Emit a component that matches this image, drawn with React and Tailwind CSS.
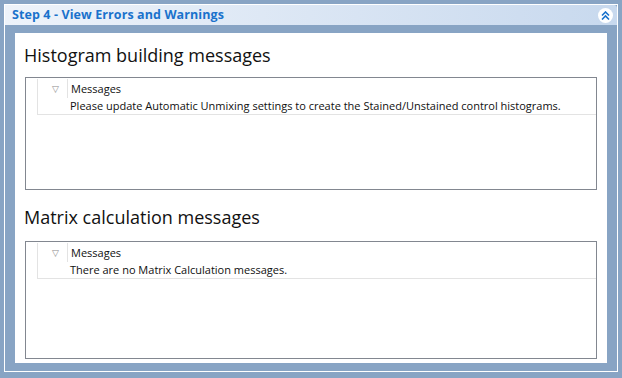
import React from 'react';

const font = { fontFamily: '"Open Sans", "Noto Sans", sans-serif' };

function MessagesGrid({ text }) {
  return (
    <div className="h-full border border-[#828790] bg-white pl-[11px] pt-[1px]">
      <div className="border-l border-b border-[#e3e3e3] text-[11px] leading-[16px] text-[#101010]">
        <div className="flex h-[19px] items-center">
          <div className="flex w-[29px] items-center justify-end pr-[8px] text-[9px] text-[#8a8a8a]">▽</div>
          <div className="h-full border-l border-[#e3e3e3]" />
          <div className="pl-[3px]">Messages</div>
        </div>
        <div className="flex h-[16px] items-center whitespace-nowrap pl-[32px] pb-[1px]">{text}</div>
      </div>
    </div>
  );
}

export default function App() {
  return (
    <div className="w-[622px] h-[378px] bg-[#88a4c4] pt-[4px] pl-[4px] pr-[4px] pb-[6px]" style={font}>
      <div className="flex h-full flex-col border border-white">
        <div className="flex h-[20px] items-center justify-between rounded-tr-[3px] bg-gradient-to-r from-[#eef3fa] to-[#c8d9ee] pl-[7px] pr-[4px]">
          <span className="text-[12.5px] font-bold tracking-[0.1px] text-[#1a72cc]">Step 4 - View Errors and Warnings</span>
          <div className="flex h-[15px] w-[15px] items-center justify-center rounded-full bg-white">
            <svg width="9" height="9" viewBox="0 0 9 9" fill="none" stroke="#1a72cc" strokeWidth="1.6">
              <path d="M1 4.5 L4.5 1 L8 4.5" />
              <path d="M1 8.5 L4.5 5 L8 8.5" />
            </svg>
          </div>
        </div>
        <div className="flex flex-1 flex-col px-[10px] pt-[8px] pb-[8px]">
          <div className="flex flex-1 flex-col bg-white pt-[8px] pb-[4px]">
            <h2 className="h-[28px] pl-[9px] text-[18px] leading-[28px] text-[#111]">Histogram building messages</h2>
            <div className="mx-[10px] mt-[8px] h-[113px]">
              <MessagesGrid text="Please update Automatic Unmixing settings to create the Stained/Unstained control histograms." />
            </div>
            <h2 className="mt-[13px] h-[28px] pl-[9px] text-[18px] leading-[28px] text-[#111]">Matrix calculation messages</h2>
            <div className="mx-[10px] mt-[10px] flex-1">
              <MessagesGrid text="There are no Matrix Calculation messages." />
            </div>
          </div>
        </div>
      </div>
    </div>
  );
}
